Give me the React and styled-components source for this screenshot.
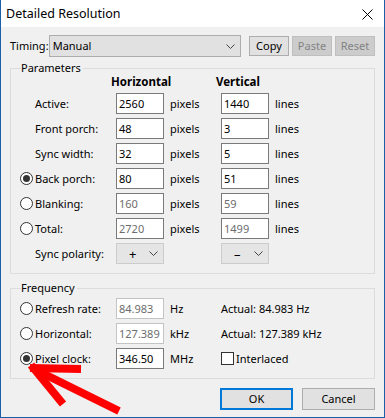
import React from 'react';
import styled, { createGlobalStyle } from 'styled-components';

const GlobalStyle = createGlobalStyle`
  html, body {
    margin: 0;
    padding: 0;
    background: #ffffff;
  }
  body {
    font-family: "Noto Sans", "Liberation Sans", sans-serif;
    font-size: 11px;
    color: #000;
  }
`;

const Chevron = () => (
  <svg width="9" height="5" viewBox="0 0 9 5">
    <path d="M0.5 0.5 L4.5 4.5 L8.5 0.5" fill="none" stroke="#444" strokeWidth="1" />
  </svg>
);

const Radio = ({ checked }) => (
  <svg width="13" height="13" viewBox="0 0 13 13">
    <circle cx="6.5" cy="6.5" r="6" fill="#fff" stroke="#333" strokeWidth="1" />
    {checked ? <circle cx="6.5" cy="6.5" r="3.5" fill="#333" /> : null}
  </svg>
);

const Arrow = () => (
  <ArrowLayer width="385" height="418" viewBox="0 0 385 418">
    <g stroke="#ff0000" strokeWidth="8" fill="none" strokeLinecap="butt">
      <line x1="30" y1="368" x2="81" y2="369" />
      <line x1="31" y1="365" x2="63" y2="404" />
      <line x1="36" y1="370" x2="119" y2="411" />
    </g>
  </ArrowLayer>
);

function App() {
  const params = [
    { label: 'Active:', h: '2560', v: '1440' },
    { label: 'Front porch:', h: '48', v: '3' },
    { label: 'Sync width:', h: '32', v: '5' },
    { label: 'Back porch:', h: '80', v: '51', radio: true, checked: true },
    { label: 'Blanking:', h: '160', v: '59', radio: true, dim: true },
    { label: 'Total:', h: '2720', v: '1499', radio: true, dim: true },
  ];

  return (
    <Window>
      <GlobalStyle />
      <TitleBar>
        <Title>Detailed Resolution</Title>
        <Close>
          <svg width="11" height="11" viewBox="0 0 11 11">
            <path d="M0.5 0.5 L10.5 10.5 M10.5 0.5 L0.5 10.5" stroke="#000" strokeWidth="1" />
          </svg>
        </Close>
      </TitleBar>

      <Body>
        <TimingRow>
          <TimingLabel>Timing:</TimingLabel>
          <Combo width={194}>
            <span>Manual</span>
            <Chevron />
          </Combo>
          <ButtonGroup>
            <SmallButton>Copy</SmallButton>
            <SmallButton disabled>Paste</SmallButton>
            <SmallButton disabled>Reset</SmallButton>
          </ButtonGroup>
        </TimingRow>

        <Group height={206}>
          <Caption>Parameters</Caption>
          <ParamGrid>
            <span />
            <Header>Horizontal</Header>
            <span />
            <Header>Vertical</Header>
            <span />
            {params.map((p) => (
              <React.Fragment key={p.label}>
                <RowLabel indent={!p.radio}>
                  {p.radio ? <Radio checked={p.checked} /> : null}
                  <span>{p.label}</span>
                </RowLabel>
                <Field dim={p.dim}>{p.h}</Field>
                <Unit>pixels</Unit>
                <Field dim={p.dim}>{p.v}</Field>
                <Unit>lines</Unit>
              </React.Fragment>
            ))}
            <RowLabel indent>
              <span>Sync polarity:</span>
            </RowLabel>
            <Polarity>
              <span>+</span>
              <Chevron />
            </Polarity>
            <span />
            <Polarity>
              <span>–</span>
              <Chevron />
            </Polarity>
            <span />
          </ParamGrid>
        </Group>

        <Group height={91} gap={14}>
          <Caption>Frequency</Caption>
          <FreqGrid>
            <RowLabel>
              <Radio />
              <span>Refresh rate:</span>
            </RowLabel>
            <Field disabled>84.983</Field>
            <Unit>Hz</Unit>
            <Actual>Actual: 84.983 Hz</Actual>

            <RowLabel>
              <Radio />
              <span>Horizontal:</span>
            </RowLabel>
            <Field disabled>127.389</Field>
            <Unit>kHz</Unit>
            <Actual>Actual: 127.389 kHz</Actual>

            <RowLabel>
              <Radio checked />
              <span>Pixel clock:</span>
            </RowLabel>
            <Field>346.50</Field>
            <Unit>MHz</Unit>
            <Actual>
              <Check />
              <span>Interlaced</span>
            </Actual>
          </FreqGrid>
        </Group>

        <Footer>
          <DialogButton primary>OK</DialogButton>
          <DialogButton>Cancel</DialogButton>
        </Footer>
      </Body>

      <Arrow />
    </Window>
  );
}

export default App;

const Window = styled.div`
  position: relative;
  width: 385px;
  height: 418px;
  box-sizing: border-box;
  border: 1px solid #1b5fa8;
  border-top: none;
  background: #f0f0f0;
  display: flex;
  flex-direction: column;
  overflow: hidden;
`;

const TitleBar = styled.div`
  height: 27px;
  flex: none;
  background: #ffffff;
  display: flex;
  align-items: center;
  justify-content: space-between;
  padding: 1px 11px 0 5px;
  box-sizing: border-box;
`;

const Title = styled.span`
  font-size: 12.5px;
  line-height: 16px;
`;

const Close = styled.div`
  display: flex;
  align-items: center;
`;

const Body = styled.div`
  flex: 1;
  display: flex;
  flex-direction: column;
  padding: 8px 9px 0 9px;
`;

const TimingRow = styled.div`
  height: 22px;
  display: flex;
  align-items: center;
`;

const TimingLabel = styled.span`
  width: 39px;
  line-height: 16px;
`;

const Combo = styled.div`
  box-sizing: border-box;
  width: ${(p) => p.width}px;
  height: 22px;
  background: #e1e1e1;
  border: 1px solid #adadad;
  display: flex;
  align-items: center;
  justify-content: space-between;
  padding: 0 5px 0 3px;
  line-height: 16px;
`;

const ButtonGroup = styled.div`
  display: flex;
  gap: 3px;
  margin-left: 8px;
`;

const SmallButton = styled.div`
  box-sizing: border-box;
  width: 40px;
  height: 20px;
  display: flex;
  align-items: center;
  justify-content: center;
  line-height: 16px;
  background: ${(p) => (p.disabled ? '#cccccc' : '#e1e1e1')};
  border: 1px solid ${(p) => (p.disabled ? '#bfbfbf' : '#adadad')};
  color: ${(p) => (p.disabled ? '#838383' : '#000')};
`;

const Group = styled.div`
  box-sizing: border-box;
  height: ${(p) => p.height}px;
  margin-top: ${(p) => p.gap || 11}px;
  border: 1px solid #dcdcdc;
  padding: 0 0 0 9px;
  display: flex;
  flex-direction: column;
`;

const Caption = styled.span`
  align-self: flex-start;
  margin: -9px 0 0 1px;
  padding: 0 2px 0 0;
  background: #f0f0f0;
  line-height: 16px;
  height: 16px;
`;

const ParamGrid = styled.div`
  display: grid;
  grid-template-columns: 96px 48px 57px 48px auto;
  grid-template-rows: 16px;
  grid-auto-rows: 21px;
  row-gap: 4px;
  margin-top: -3px;
`;

const FreqGrid = styled.div`
  display: grid;
  grid-template-columns: 96px 48px 57px auto;
  grid-auto-rows: 21px;
  row-gap: 4px;
  margin-top: 2px;
`;

const Header = styled.span`
  font-weight: bold;
  font-size: 11.5px;
  line-height: 16px;
  margin: 1px 0 0 -5px;
`;

const RowLabel = styled.div`
  display: flex;
  align-items: center;
  gap: 2px;
  padding-left: ${(p) => (p.indent ? 15 : 0)}px;
  line-height: 16px;
`;

const Field = styled.div`
  box-sizing: border-box;
  height: 21px;
  background: #ffffff;
  border: 1px solid ${(p) => (p.disabled ? '#c4c4c4' : '#7a7a7a')};
  color: ${(p) => (p.dim || p.disabled ? '#6d6d6d' : '#000')};
  padding-left: 2px;
  display: flex;
  align-items: center;
  line-height: 16px;
`;

const Unit = styled.span`
  padding-left: 6px;
  display: flex;
  align-items: center;
  line-height: 16px;
`;

const Polarity = styled.div`
  box-sizing: border-box;
  height: 21px;
  background: #e5e5e5;
  border: 1px solid #cccccc;
  display: flex;
  align-items: center;
  justify-content: space-between;
  padding: 0 5px 0 12px;
  font-size: 13px;
`;

const Actual = styled.div`
  display: flex;
  align-items: center;
  gap: 2px;
  line-height: 16px;
`;

const Check = styled.span`
  box-sizing: border-box;
  width: 13px;
  height: 13px;
  border: 1px solid #333;
  background: #fff;
`;

const Footer = styled.div`
  display: flex;
  justify-content: flex-end;
  gap: 9px;
  margin-top: 9px;
`;

const DialogButton = styled.div`
  box-sizing: border-box;
  width: 73px;
  height: 22px;
  display: flex;
  align-items: center;
  justify-content: center;
  line-height: 16px;
  background: #e1e1e1;
  border: ${(p) => (p.primary ? '2px solid #0078d7' : '1px solid #adadad')};
`;

const ArrowLayer = styled.svg`
  position: absolute;
  left: -1px;
  top: 0;
  pointer-events: none;
`;
